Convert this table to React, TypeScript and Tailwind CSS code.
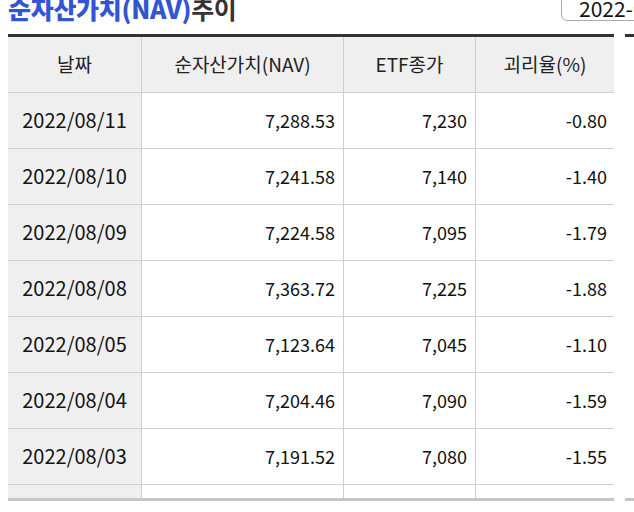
import React from "react";

const rows = [
  ["2022/08/11", "7,288.53", "7,230", "-0.80"],
  ["2022/08/10", "7,241.58", "7,140", "-1.40"],
  ["2022/08/09", "7,224.58", "7,095", "-1.79"],
  ["2022/08/08", "7,363.72", "7,225", "-1.88"],
  ["2022/08/05", "7,123.64", "7,045", "-1.10"],
  ["2022/08/04", "7,204.46", "7,090", "-1.59"],
  ["2022/08/03", "7,191.52", "7,080", "-1.55"],
];

const font = { fontFamily: '"Noto Sans CJK KR", "Noto Sans", sans-serif' };

export default function App() {
  return (
    <div
      className="w-[634px] h-[512px] overflow-hidden bg-white text-[#222]"
      style={font}
    >
      <div className="relative h-[34px]">
        <div className="absolute left-[8px] top-[-7px] text-[25px] leading-[30px] whitespace-nowrap tracking-[-0.3px]">
          <span className="text-[#3355d1] font-black">순자산가치(NAV)</span>
          <span className="text-[#333] font-bold">추이</span>
        </div>
        <div className="absolute left-[561px] top-[-10px] w-[110px] h-[31px] border border-[#aaa] rounded-[6px] pl-[17px] pt-[5px] text-[21px] leading-[24px] text-[#111] whitespace-nowrap">
          2022-08-11
        </div>
      </div>
      <div className="flex gap-[11px] pl-[8px]">
        <div className="w-[606px] shrink-0 border-t-[3px] border-t-[#333] border-b-[3px] border-b-[#c6c6c6]">
          <div className="grid grid-cols-[133px_202px_132px_139px] h-[56px] bg-[#efefef] border-b border-[#cfcfcf] text-[19px] text-[#222]">
            <div className="flex items-center justify-center">날짜</div>
            <div className="flex items-center justify-center border-l border-[#cfcfcf]">순자산가치(NAV)</div>
            <div className="flex items-center justify-center border-l border-[#cfcfcf]">ETF종가</div>
            <div className="flex items-center justify-center border-l border-[#cfcfcf]">괴리율(%)</div>
          </div>
          {rows.map((r) => (
            <div
              key={r[0]}
              className="grid grid-cols-[133px_202px_132px_139px] h-[56px] border-b border-[#cfcfcf] text-[18px] text-[#111]"
            >
              <div className="flex items-center justify-center bg-[#efefef] text-[20px] pb-[2px]">{r[0]}</div>
              <div className="flex items-center justify-end pr-[8px] border-l border-[#cfcfcf]">{r[1]}</div>
              <div className="flex items-center justify-end pr-[8px] border-l border-[#cfcfcf]">{r[2]}</div>
              <div className="flex items-center justify-end pr-[7px] border-l border-[#cfcfcf]">{r[3]}</div>
            </div>
          ))}
          <div className="grid grid-cols-[133px_202px_132px_139px] h-[13px]">
            <div className="bg-[#efefef]"></div>
            <div className="border-l border-[#cfcfcf]"></div>
            <div className="border-l border-[#cfcfcf]"></div>
            <div className="border-l border-[#cfcfcf]"></div>
          </div>
        </div>
        <div className="w-[40px] shrink-0 border-t-[3px] border-t-[#333] border-b-[3px] border-b-[#c6c6c6]"></div>
      </div>
    </div>
  );
}
